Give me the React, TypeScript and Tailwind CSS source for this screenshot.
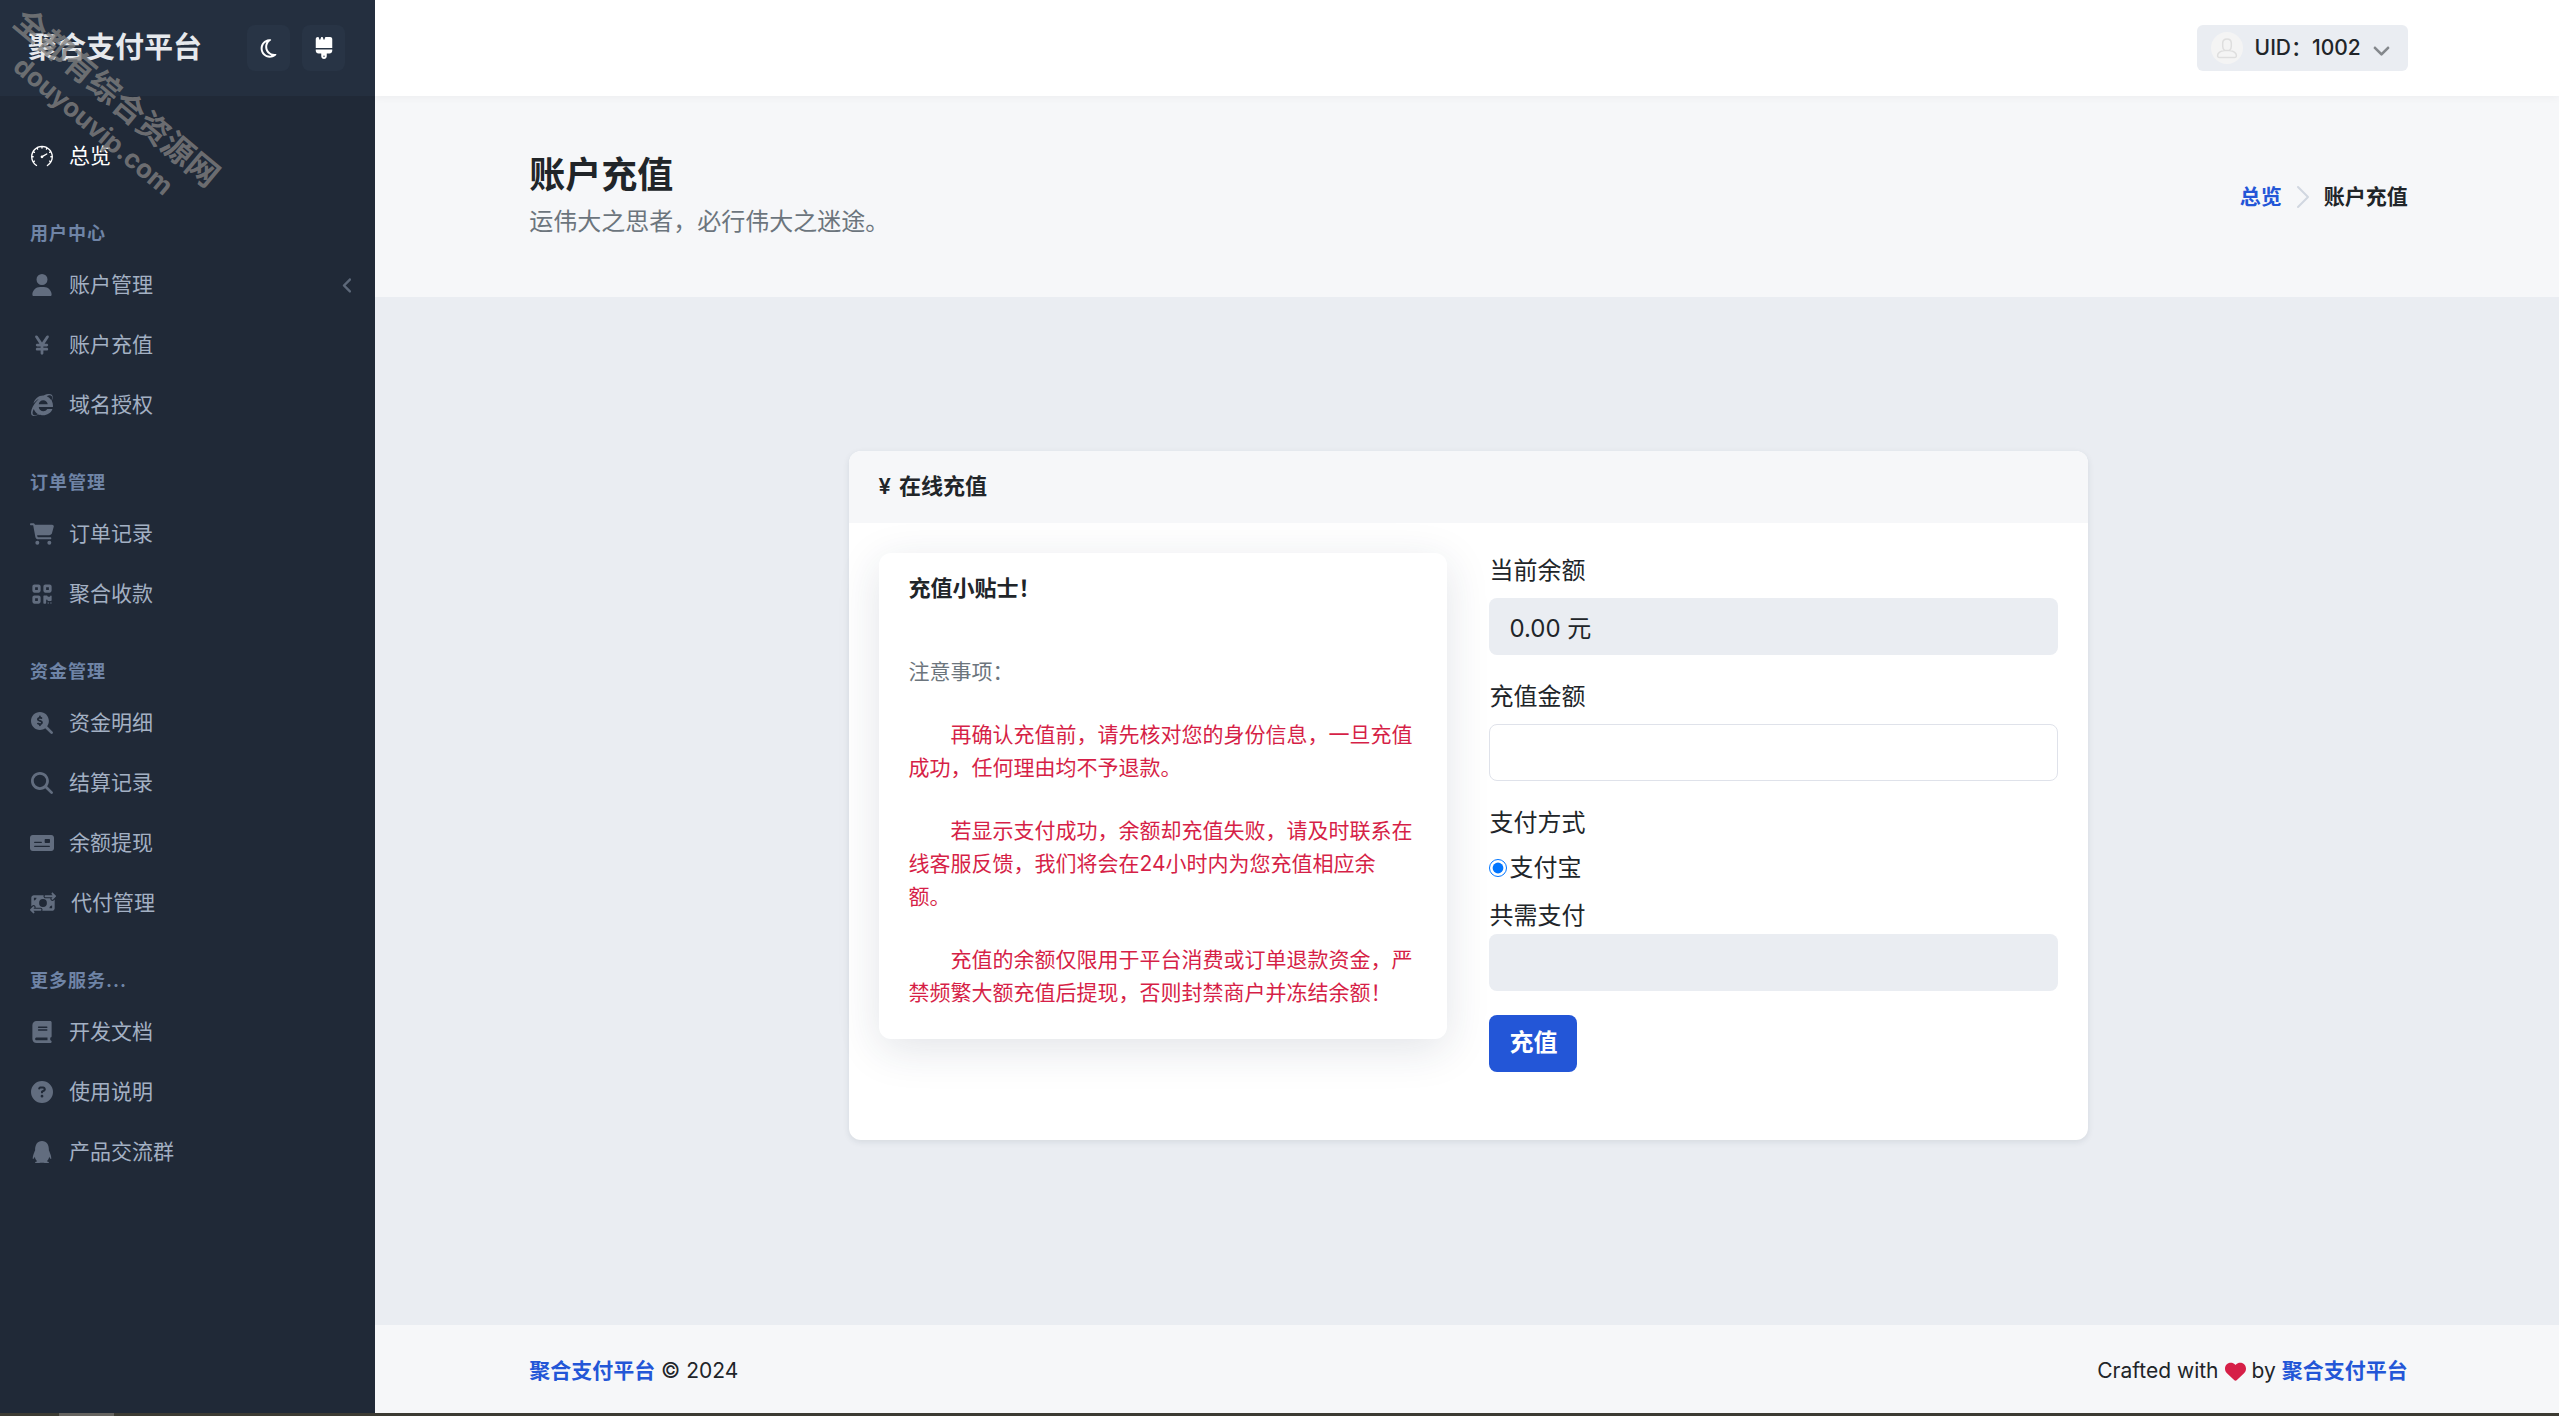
import { useState } from "react";
import type { IconType } from "react-icons";
import {
  FaAngleDown,
  FaAngleLeft,
  FaBook,
  FaBrush,
  FaCartShopping,
  FaCircleQuestion,
  FaHeart,
  FaInternetExplorer,
  FaMagnifyingGlass,
  FaMagnifyingGlassDollar,
  FaMoneyBillTransfer,
  FaMoneyCheck,
  FaQq,
  FaQrcode,
  FaRegMoon,
  FaUser,
  FaYenSign,
} from "react-icons/fa6";
import { SlSpeedometer } from "react-icons/sl";

type NavItem = {
  label: string;
  icon: IconType;
  iconWidth?: string;
  submenu?: boolean;
};
type NavGroup = { heading: string; items: NavItem[] };

const NAV_GROUPS: NavGroup[] = [
  {
    heading: "用户中心",
    items: [
      { label: "账户管理", icon: FaUser, submenu: true },
      { label: "账户充值", icon: FaYenSign },
      { label: "域名授权", icon: FaInternetExplorer },
    ],
  },
  {
    heading: "订单管理",
    items: [
      { label: "订单记录", icon: FaCartShopping, iconWidth: "w-6" },
      { label: "聚合收款", icon: FaQrcode },
    ],
  },
  {
    heading: "资金管理",
    items: [
      { label: "资金明细", icon: FaMagnifyingGlassDollar },
      { label: "结算记录", icon: FaMagnifyingGlass },
      { label: "余额提现", icon: FaMoneyCheck, iconWidth: "w-6" },
      { label: "代付管理", icon: FaMoneyBillTransfer, iconWidth: "w-[26px]" },
    ],
  },
  {
    heading: "更多服务...",
    items: [
      { label: "开发文档", icon: FaBook },
      { label: "使用说明", icon: FaCircleQuestion },
      { label: "产品交流群", icon: FaQq },
    ],
  },
];

const TIPS = [
  "再确认充值前，请先核对您的身份信息，一旦充值成功，任何理由均不予退款。",
  "若显示支付成功，余额却充值失败，请及时联系在线客服反馈，我们将会在24小时内为您充值相应余额。",
  "充值的余额仅限用于平台消费或订单退款资金，严禁频繁大额充值后提现，否则封禁商户并冻结余额！",
];

function NavLink({ item }: { item: NavItem }) {
  const Icon = item.icon;
  return (
    <li>
      <a
        href="#"
        className="flex h-[60px] items-center pr-[18px] pl-[30px] text-[21px] text-[#a3b0c3]"
      >
        <span className="mr-[15px] flex min-w-6 justify-center text-[#626d7f]">
          <Icon className={`h-[22px] shrink-0 ${item.iconWidth ?? "w-[22px]"}`} />
        </span>
        <span className="flex-1">{item.label}</span>
        {item.submenu ? (
          <FaAngleLeft className="size-[19px] text-[#5d6879]" />
        ) : null}
      </a>
    </li>
  );
}

function Sidebar() {
  return (
    <aside className="relative w-[375px] shrink-0 bg-[#202937]">
      <div className="flex h-24 items-center justify-between bg-[#242f3f] pr-[30px] pl-7">
        <a href="#" className="text-[29px] font-bold text-[#e6e9ed]">
          聚合支付平台
        </a>
        <div className="flex gap-3">
          <button
            type="button"
            aria-label="深色模式"
            className="flex h-[46px] w-[43px] items-center justify-center rounded-lg bg-[#283445] text-white"
          >
            <FaRegMoon className="size-[21px]" />
          </button>
          <button
            type="button"
            aria-label="主题颜色"
            className="flex h-[46px] w-[43px] items-center justify-center rounded-lg bg-[#283445] text-white"
          >
            <FaBrush className="size-[22px]" />
          </button>
        </div>
      </div>

      <nav className="pt-[30px]">
        <a
          href="#"
          className="flex h-[60px] items-center px-[30px] text-[21px] text-white"
        >
          <span className="mr-[15px] flex min-w-6 justify-center">
            <SlSpeedometer className="size-[22px]" />
          </span>
          总览
        </a>
        {NAV_GROUPS.map((group) => (
          <section key={group.heading}>
            <h2 className="px-[30px] pt-9 pb-[9px] text-lg leading-6 font-bold tracking-[1px] text-[#6f84a6]">
              {group.heading}
            </h2>
            <ul>
              {group.items.map((item) => (
                <NavLink key={item.label} item={item} />
              ))}
            </ul>
          </section>
        ))}
      </nav>

      {/* watermark */}
      <div className="pointer-events-none absolute top-[76px] -left-6 w-[258px] rotate-40 text-center leading-9 font-bold whitespace-nowrap text-[#808080]/80">
        <p className="text-[32px]">全都有综合资源网</p>
        <p className="text-[26px]">douyouvip.com</p>
      </div>
    </aside>
  );
}

function TopBar() {
  return (
    <header className="relative h-24 bg-white shadow-[0_2px_8px_rgba(0,0,0,0.04)]">
      <div className="mx-auto flex h-full w-[90%] items-center justify-end pr-[42px] pl-[45px]">
        <button
          type="button"
          className="flex h-[46px] items-center rounded-md bg-[#eaedf2] pr-4 pl-[14px] text-[21px] font-medium text-[#212529]"
        >
          <svg viewBox="0 0 32 32" className="mr-3 size-8">
            <circle cx="16" cy="16" r="16" fill="#f4f4f4" />
            <path
              d="M16 7c2.600 0 4.300 1.900 4.300 4.300v3.300c0 1.600-.7 3-1.800 3.800 3.900.6 6.700 2.300 6.900 5 .1 1.400-.7 2.100-1.900 2.100h-15c-1.200 0-2-.7-1.900-2.100.2-2.700 3-4.400 6.900-5-1.100-.8-1.800-2.200-1.800-3.800v-3.300C11.700 8.900 13.400 7 16 7z M13.500 18.400h5"
              fill="none"
              stroke="#dedede"
              strokeWidth="1.500"
            />
          </svg>
          UID：1002
          <FaAngleDown className="mt-1 ml-[10px] size-[21px] opacity-50" />
        </button>
      </div>
    </header>
  );
}

function PageHero() {
  return (
    <div className="bg-[#f6f7f9]">
      <div className="mx-auto flex w-[90%] items-center justify-between py-[57px] pr-[42px] pl-[45px]">
        <div>
          <h1 className="mb-[6px] text-4xl leading-[45px] font-bold">
            账户充值
          </h1>
          <p className="text-2xl leading-9 text-[#6c757d]">
            运伟大之思者，必行伟大之迷途。
          </p>
        </div>
        <nav aria-label="breadcrumb">
          <ol className="flex items-center text-[21px] font-semibold">
            <li>
              <a href="#" className="text-[#2356d7]">
                总览
              </a>
            </li>
            <li aria-hidden="true" className="px-[14px]">
              <svg
                viewBox="0 0 14 24"
                className="h-6 w-[14px]"
                fill="none"
                stroke="#d1d7e0"
                strokeWidth="2"
                strokeLinecap="round"
                strokeLinejoin="round"
              >
                <path d="M2 2l10 10L2 22" />
              </svg>
            </li>
            <li aria-current="page">账户充值</li>
          </ol>
        </nav>
      </div>
    </div>
  );
}

function TipsCard() {
  return (
    <div className="rounded-xl bg-white shadow-[0_10px_44px_rgba(28,45,75,0.13)]">
      <h3 className="flex h-[72px] items-center px-[30px] text-[22px] font-semibold">
        充值小贴士！
      </h3>
      <div className="flex flex-col gap-[30px] py-[30px] pr-8 pl-[30px] text-[21px] leading-[33px] [text-spacing-trim:space-all]">
        <p className="text-[#6c757d]">注意事项：</p>
        {TIPS.map((tip) => (
          <p key={tip} className="indent-[42px] text-[#d61f47]">
            {tip}
          </p>
        ))}
      </div>
    </div>
  );
}

function RechargeForm() {
  const [amount, setAmount] = useState("");

  return (
    <form
      className="text-2xl leading-9"
      onSubmit={(e) => e.preventDefault()}
    >
      <div className="mb-6">
        <label htmlFor="balance" className="mb-[9px] block">
          当前余额
        </label>
        <input
          id="balance"
          value="0.00 元"
          disabled
          className="block h-[57px] w-full rounded-lg bg-[#eaedf2] px-5"
        />
      </div>
      <div className="mb-6">
        <label htmlFor="amount" className="mb-[9px] block">
          充值金额
        </label>
        <input
          id="amount"
          value={amount}
          onChange={(e) => setAmount(e.target.value)}
          className="block h-[57px] w-full rounded-lg border border-[#dfe2ea] bg-white px-5"
        />
      </div>
      <fieldset className="mb-3">
        <legend className="mb-[9px]">支付方式</legend>
        <label className="flex items-center gap-[2px]">
          <input
            type="radio"
            name="paytype"
            defaultChecked
            className="size-[18px]"
          />
          支付宝
        </label>
      </fieldset>
      <div className="mb-6">
        <label htmlFor="total" className="block">
          共需支付
        </label>
        <input
          id="total"
          value={amount}
          disabled
          className="block h-[57px] w-full rounded-lg bg-[#eaedf2] px-5"
        />
      </div>
      <button
        type="submit"
        className="h-[57px] rounded-lg bg-[#2356d7] px-5 font-bold text-white"
      >
        充值
      </button>
    </form>
  );
}

function Footer() {
  return (
    <footer className="bg-[#f6f7f9]">
      <div className="mx-auto flex w-[90%] justify-between pt-[30px] pr-[42px] pb-[26px] pl-[45px] text-[21px] leading-8">
        <p>
          <a href="#" className="font-semibold text-[#2356d7]">
            聚合支付平台
          </a>{" "}
          © 2024
        </p>
        <p className="flex items-center gap-[6px]">
          Crafted with
          <FaHeart className="size-[21px] text-[#d61f47]" />
          by
          <a href="#" className="font-semibold text-[#2356d7]">
            聚合支付平台
          </a>
        </p>
      </div>
    </footer>
  );
}

export default function App() {
  return (
    <div className="flex min-h-screen flex-col font-[Inter,'Noto_Sans_CJK_SC',sans-serif] text-[#212529]">
      <div className="flex flex-1">
        <Sidebar />
        <div className="flex min-w-0 flex-1 flex-col bg-[#eaedf2]">
          <TopBar />
          <PageHero />
          <main className="mx-auto flex w-[90%] flex-1 items-center justify-center pr-[42px] pl-[45px]">
            <section className="mb-8 w-[66%] rounded-xl bg-white shadow-[0_2px_6px_rgba(30,45,70,0.1)]">
              <h2 className="flex h-[72px] items-center gap-2 rounded-t-xl bg-[#f6f7f9] px-[30px] text-[22px] font-semibold">
                <span>¥</span>
                <span>在线充值</span>
              </h2>
              <div className="grid grid-cols-2 items-start gap-[42px] px-[30px] pt-[30px] pb-[68px]">
                <TipsCard />
                <RechargeForm />
              </div>
            </section>
          </main>
          <Footer />
        </div>
      </div>
      <div className="flex h-[3px] bg-[#3c3b33] pl-[59px]">
        <div className="w-[55px] bg-[#65635f]" />
      </div>
    </div>
  );
}
